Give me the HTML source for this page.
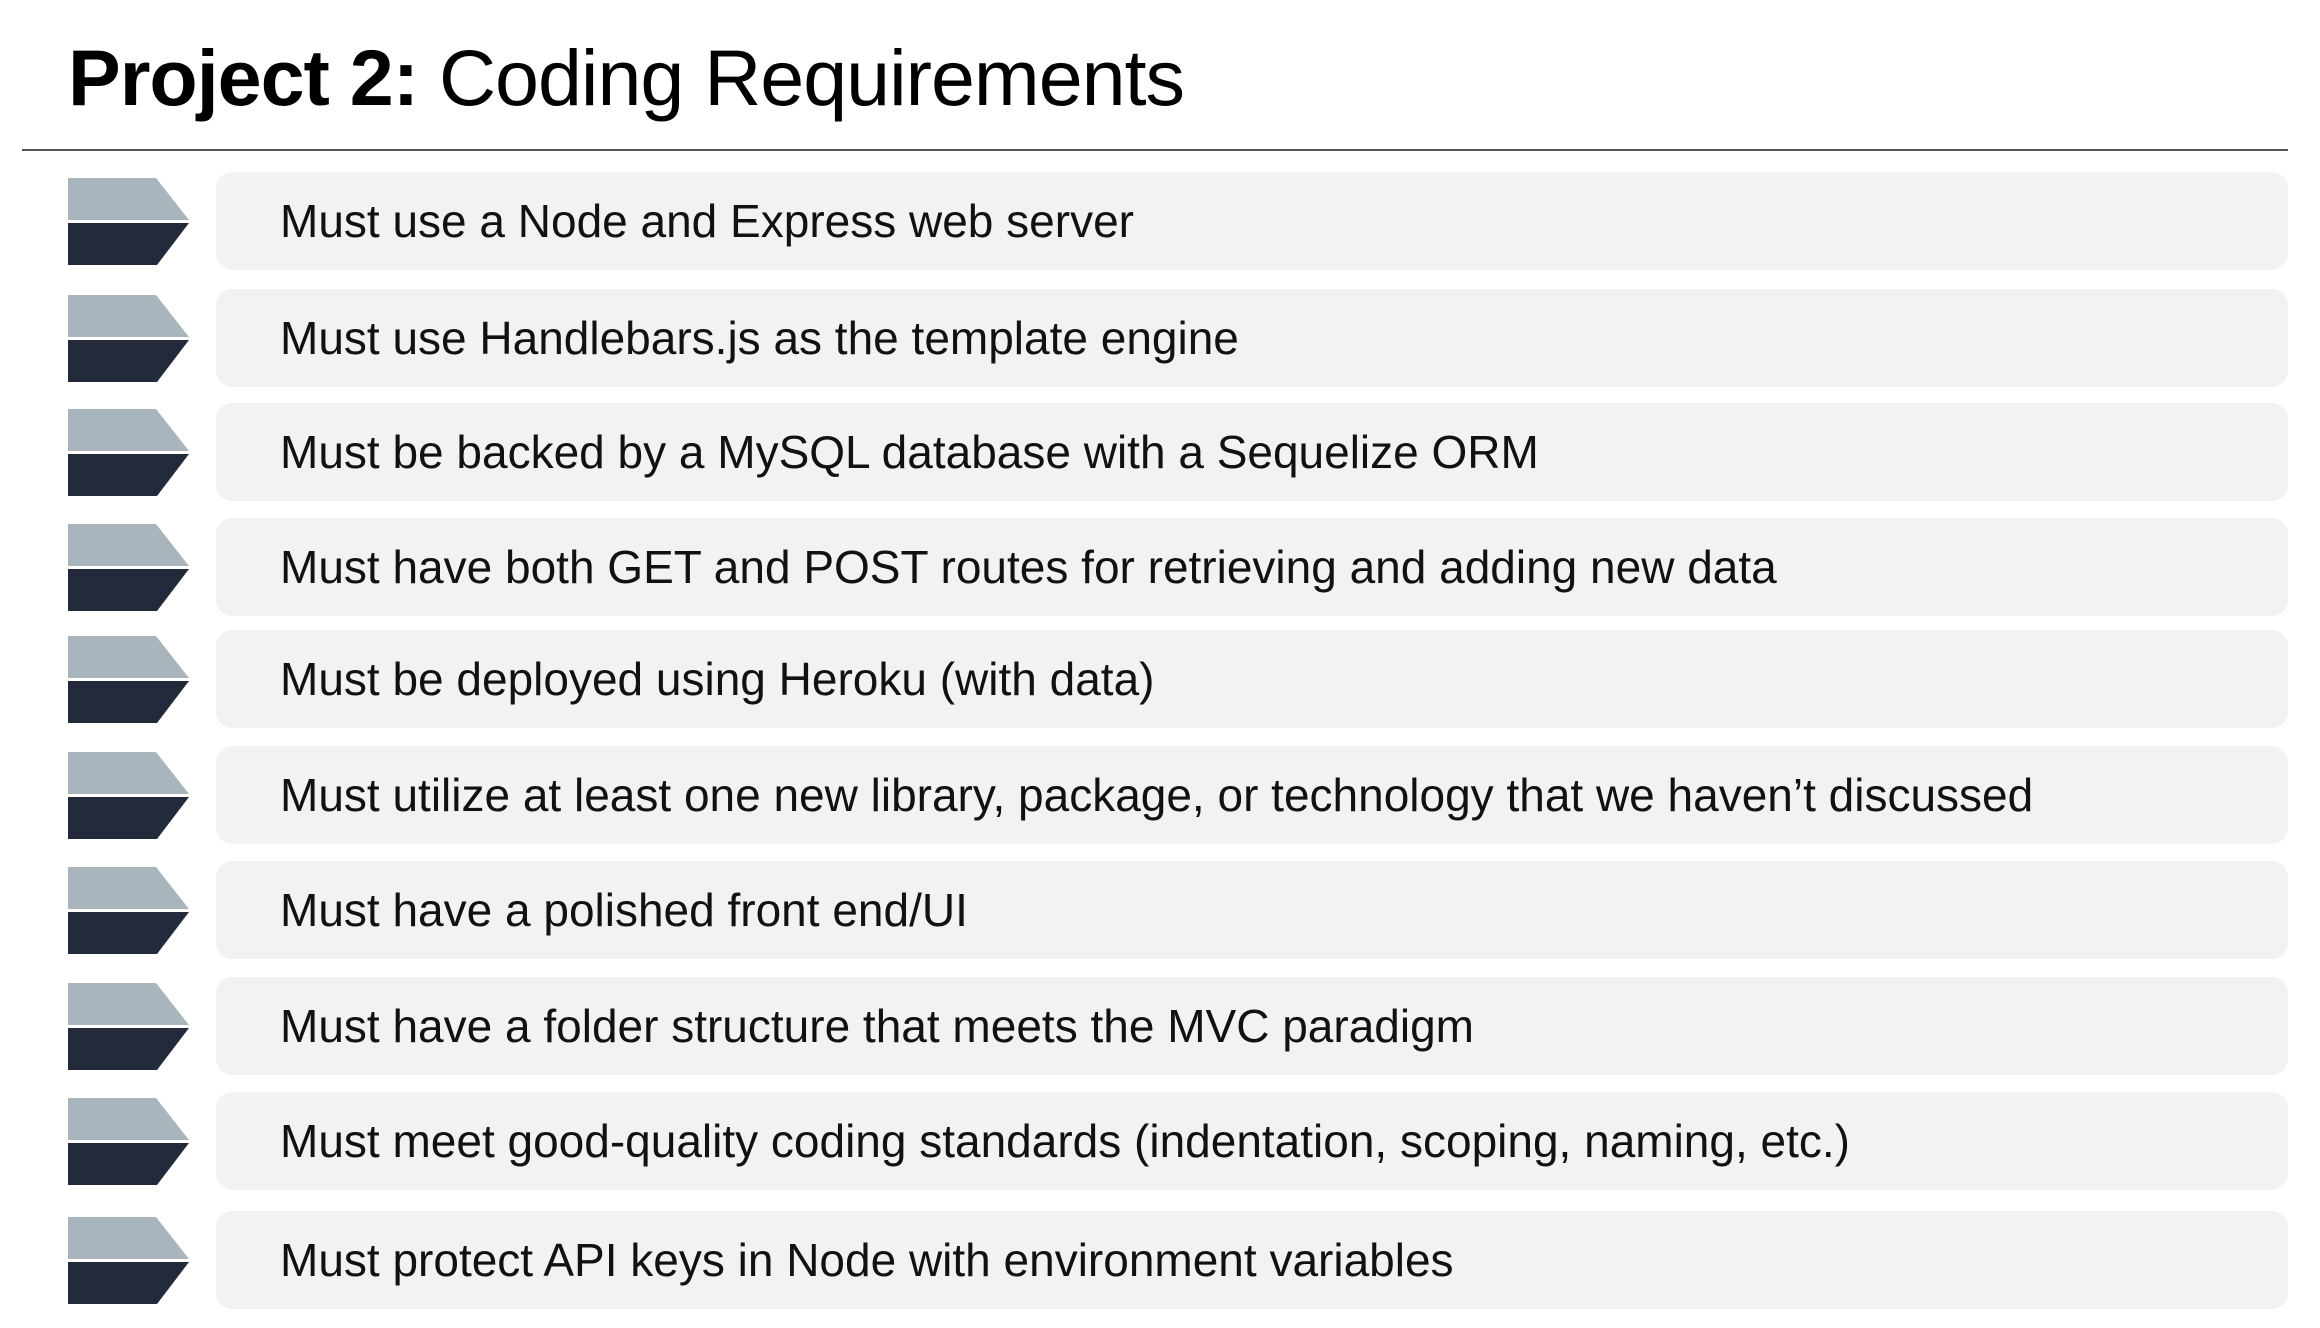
<!DOCTYPE html>
<html><head><meta charset="utf-8"><style>
html,body{margin:0;padding:0;background:#fff;}
body{width:2320px;height:1328px;position:relative;overflow:hidden;font-family:"Liberation Sans",Arial,sans-serif;}
h1{position:absolute;left:68px;top:32px;margin:0;font-size:79px;font-weight:400;color:#000;letter-spacing:-1px;white-space:nowrap;}
h1 b{font-weight:700;}
.rule{position:absolute;left:22px;width:2266px;top:149px;height:2px;background:#555;}
.row{position:absolute;left:0;width:2320px;height:98px;}
.box{position:absolute;left:216px;right:32px;top:0;height:98px;background:#f2f2f2;border-radius:16px;}
.box span{position:absolute;left:64px;top:0;line-height:98px;font-size:46px;color:#111;white-space:nowrap;}
svg{position:absolute;left:68px;top:6px;}
</style></head><body>
<h1><b>Project 2:</b> Coding Requirements</h1>
<div class="rule"></div>

<div class="row" style="top:172px"><svg width="122" height="88"><polygon points="0,0 88,0 121,42 0,42" fill="#a9b5bc"/><polygon points="0,45 121,45 89,87 0,87" fill="#222a3c"/></svg><div class="box"><span>Must use a Node and Express web server</span></div></div>
<div class="row" style="top:289px"><svg width="122" height="88"><polygon points="0,0 88,0 121,42 0,42" fill="#a9b5bc"/><polygon points="0,45 121,45 89,87 0,87" fill="#222a3c"/></svg><div class="box"><span>Must use Handlebars.js as the template engine</span></div></div>
<div class="row" style="top:403px"><svg width="122" height="88"><polygon points="0,0 88,0 121,42 0,42" fill="#a9b5bc"/><polygon points="0,45 121,45 89,87 0,87" fill="#222a3c"/></svg><div class="box"><span>Must be backed by a MySQL database with a Sequelize ORM</span></div></div>
<div class="row" style="top:518px"><svg width="122" height="88"><polygon points="0,0 88,0 121,42 0,42" fill="#a9b5bc"/><polygon points="0,45 121,45 89,87 0,87" fill="#222a3c"/></svg><div class="box"><span>Must have both GET and POST routes for retrieving and adding new data</span></div></div>
<div class="row" style="top:630px"><svg width="122" height="88"><polygon points="0,0 88,0 121,42 0,42" fill="#a9b5bc"/><polygon points="0,45 121,45 89,87 0,87" fill="#222a3c"/></svg><div class="box"><span>Must be deployed using Heroku (with data)</span></div></div>
<div class="row" style="top:746px"><svg width="122" height="88"><polygon points="0,0 88,0 121,42 0,42" fill="#a9b5bc"/><polygon points="0,45 121,45 89,87 0,87" fill="#222a3c"/></svg><div class="box"><span>Must utilize at least one new library, package, or technology that we haven’t discussed</span></div></div>
<div class="row" style="top:861px"><svg width="122" height="88"><polygon points="0,0 88,0 121,42 0,42" fill="#a9b5bc"/><polygon points="0,45 121,45 89,87 0,87" fill="#222a3c"/></svg><div class="box"><span>Must have a polished front end/UI</span></div></div>
<div class="row" style="top:977px"><svg width="122" height="88"><polygon points="0,0 88,0 121,42 0,42" fill="#a9b5bc"/><polygon points="0,45 121,45 89,87 0,87" fill="#222a3c"/></svg><div class="box"><span>Must have a folder structure that meets the MVC paradigm</span></div></div>
<div class="row" style="top:1092px"><svg width="122" height="88"><polygon points="0,0 88,0 121,42 0,42" fill="#a9b5bc"/><polygon points="0,45 121,45 89,87 0,87" fill="#222a3c"/></svg><div class="box"><span>Must meet good-quality coding standards (indentation, scoping, naming, etc.)</span></div></div>
<div class="row" style="top:1211px"><svg width="122" height="88"><polygon points="0,0 88,0 121,42 0,42" fill="#a9b5bc"/><polygon points="0,45 121,45 89,87 0,87" fill="#222a3c"/></svg><div class="box"><span>Must protect API keys in Node with environment variables</span></div></div>
</body></html>
